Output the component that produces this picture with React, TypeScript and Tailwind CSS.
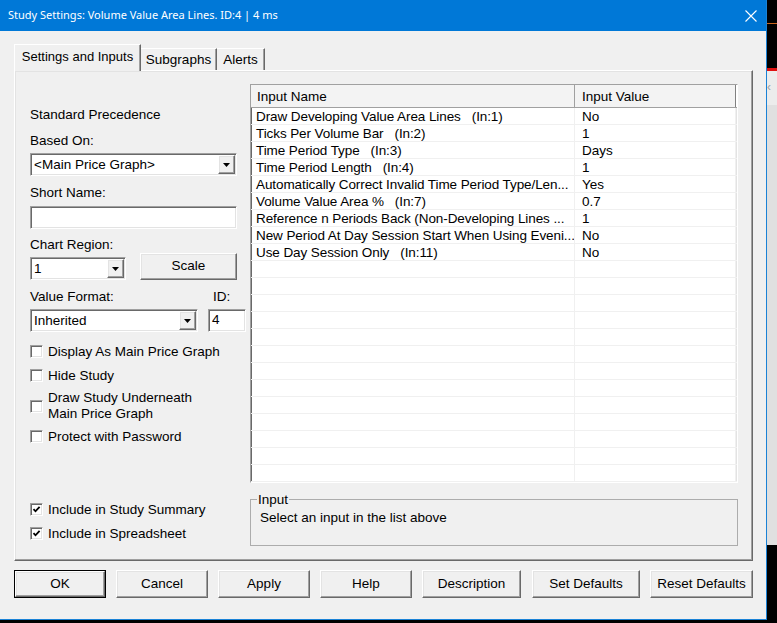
import React from 'react';

const sunken =
  'border border-t-[#a0a0a0] border-l-[#a0a0a0] border-r-white border-b-white bg-white shadow-[inset_1px_1px_0_#696969,inset_-1px_-1px_0_#e3e3e3]';
const raised =
  'border border-t-white border-l-white border-r-[#696969] border-b-[#696969] bg-[#f0f0f0] shadow-[inset_-1px_-1px_0_#a0a0a0,inset_1px_1px_0_#e3e3e3]';

const rows: [string, string][] = [
  ['Draw Developing Value Area Lines   (In:1)', 'No'],
  ['Ticks Per Volume Bar   (In:2)', '1'],
  ['Time Period Type   (In:3)', 'Days'],
  ['Time Period Length   (In:4)', '1'],
  ['Automatically Correct Invalid Time Period Type/Len...', 'Yes'],
  ['Volume Value Area %   (In:7)', '0.7'],
  ['Reference n Periods Back (Non-Developing Lines ...', '1'],
  ['New Period At Day Session Start When Using Eveni...', 'No'],
  ['Use Day Session Only   (In:11)', 'No'],
];

const DropArrow = () => (
  <div className={`flex h-[19px] w-[17px] shrink-0 items-center justify-center ${raised}`}>
    <svg width="7" height="4" viewBox="0 0 7 4">
      <path d="M0 0H7L3.5 4Z" fill="#000" />
    </svg>
  </div>
);

const Combo: React.FC<{ value: string; width: string }> = ({ value, width }) => (
  <div className={`flex h-[23px] items-center p-[1px] ${width} ${sunken}`}>
    <span className="flex-1 truncate pl-[2px] leading-[17px]">{value}</span>
    <DropArrow />
  </div>
);

const CheckBox: React.FC<{ checked?: boolean }> = ({ checked }) => (
  <div className={`flex h-[13px] w-[13px] shrink-0 items-center justify-center ${sunken}`}>
    {checked && (
      <svg width="9" height="9" viewBox="0 0 9 9">
        <path d="M1.5 4.2L3.5 6.3L7.6 1.8" stroke="#000" strokeWidth="1.8" fill="none" />
      </svg>
    )}
  </div>
);

const Check: React.FC<{ label: React.ReactNode; checked?: boolean; className?: string }> = ({
  label,
  checked,
  className = '',
}) => (
  <div className={`flex items-center gap-[5px] ${className}`}>
    <CheckBox checked={checked} />
    <div className="leading-[17px]">{label}</div>
  </div>
);

const Btn: React.FC<{ label: string; width: string; isDefault?: boolean }> = ({ label, width, isDefault }) => (
  <div className={`h-[28px] ${width} ${isDefault ? 'border border-black' : ''}`}>
    <div className={`flex h-full w-full items-center justify-center ${raised}`}>{label}</div>
  </div>
);

export default function App() {
  return (
    <div className="flex h-[623px] w-[777px] overflow-hidden bg-black font-['Liberation_Sans',Arial,sans-serif] text-[13.5px] text-black">
      {/* dialog */}
      <div className="flex h-[620px] w-[767px] shrink-0 flex-col border-r border-b border-[#1a82d6] bg-[#f0f0f0]">
        <div className="flex h-[31px] shrink-0 items-center bg-[#0078d7] pl-[8px] pr-[9px] font-['Noto_Sans',sans-serif] text-[11px] text-white">
          <span>Study Settings: Volume Value Area Lines. ID:4 | 4 ms</span>
          <svg className="ml-auto" width="12" height="12" viewBox="0 0 12 12">
            <path d="M0.5 0.5L11.5 11.5M11.5 0.5L0.5 11.5" stroke="#fff" strokeWidth="1.1" />
          </svg>
        </div>

        {/* tabs */}
        <div className="ml-[14px] mt-[13px] flex h-[27px] items-end">
          <div className="relative z-10 flex h-[27px] w-[127px] items-center justify-center border-l border-t border-r border-l-white border-t-white border-r-[#696969] bg-[#f0f0f0] pb-[2px] text-[13px] shadow-[inset_-1px_0_0_#a0a0a0]">
            Settings and Inputs
          </div>
          <div className="flex h-[23px] w-[76px] items-center justify-center border-t border-r border-t-white border-r-[#696969] shadow-[inset_-1px_0_0_#a0a0a0]">
            Subgraphs
          </div>
          <div className="flex h-[23px] w-[48px] items-center justify-center border-t border-r border-t-white border-r-[#696969] shadow-[inset_-1px_0_0_#a0a0a0]">
            Alerts
          </div>
        </div>

        {/* panel */}
        <div className="-mt-[1px] ml-[14px] flex h-[491px] w-[739px] border border-t-white border-l-white border-r-[#696969] border-b-[#696969] pl-[15px] shadow-[inset_-1px_-1px_0_#a0a0a0,inset_1px_1px_0_#e3e3e3]">
          {/* left column */}
          <div className="flex w-[218px] shrink-0 flex-col">
            <div className="mt-[35px] leading-[17px]">Standard Precedence</div>
            <div className="mt-[9px] leading-[17px]">Based On:</div>
            <div className="mt-[4px]">
              <Combo value="<Main Price Graph>" width="w-[207px]" />
            </div>
            <div className="mt-[8px] leading-[17px]">Short Name:</div>
            <div className={`mt-[5px] h-[23px] w-[207px] ${sunken}`} />
            <div className="mt-[7px] leading-[17px]">Chart Region:</div>
            <div className="flex items-end">
              <Combo value="1" width="w-[96px]" />
              <div className={`ml-[14px] flex h-[27px] w-[97px] items-center justify-center ${raised}`}>Scale</div>
            </div>
            <div className="mt-[8px] flex leading-[17px]">
              <span className="w-[183px]">Value Format:</span>
              <span>ID:</span>
            </div>
            <div className="mt-[4px] flex">
              <Combo value="Inherited" width="w-[168px]" />
              <div className={`ml-[10px] flex h-[23px] w-[38px] items-center pl-[3px] ${sunken}`}>4</div>
            </div>
            <Check className="mt-[11px]" label="Display As Main Price Graph" />
            <Check className="mt-[7px]" label="Hide Study" />
            <Check
              className="mt-[6px]"
              label={
                <div className="leading-[16px]">
                  Draw Study Underneath
                  <br />
                  Main Price Graph
                </div>
              }
            />
            <Check className="mt-[6px]" label="Protect with Password" />
            <Check className="mt-[56px]" checked label="Include in Study Summary" />
            <Check className="mt-[7px]" checked label="Include in Spreadsheet" />
          </div>

          {/* right column */}
          <div className="ml-[2px] flex w-[488px] shrink-0 flex-col">
            <div className={`mt-[13px] h-[399px] overflow-hidden ${sunken}`}>
              <div className="flex h-[23px] border-b border-[#a0a0a0] bg-white">
                <div className="flex w-[324px] items-center border-r border-[#a0a0a0] bg-[#f3f3f3] pl-[6px] pt-[1px] leading-[17px]">
                  Input Name
                </div>
                <div className="flex w-[161px] items-center border-r border-[#808080] bg-[#f3f3f3] pl-[7px] pt-[1px] leading-[17px]">
                  Input Value
                </div>
              </div>
              {Array.from({ length: 24 }).map((_, i) => (
                <div key={i} className="flex h-[17px] border-b border-[#f0f0f0]">
                  <div className="w-[324px] overflow-hidden whitespace-pre border-r border-[#f0f0f0] pl-[5px] leading-[17px] tracking-[-0.09px]">
                    {rows[i]?.[0] ?? ''}
                  </div>
                  <div className="w-[161px] border-r border-[#f0f0f0] pl-[7px] leading-[17px]">{rows[i]?.[1] ?? ''}</div>
                </div>
              ))}
            </div>
            <fieldset className="mt-[8px] h-[55px] border border-[#acacac] pl-[6px]">
              <legend className="px-[1px] leading-[17px]">Input</legend>
              <div className="pl-[3px] pt-[1px] leading-[17px]">Select an input in the list above</div>
            </fieldset>
          </div>
        </div>

        {/* buttons */}
        <div className="ml-[14px] mt-[9px] flex gap-[10px]">
          <Btn label="OK" width="w-[92px]" isDefault />
          <Btn label="Cancel" width="w-[92px]" />
          <Btn label="Apply" width="w-[92px]" />
          <Btn label="Help" width="w-[92px]" />
          <Btn label="Description" width="w-[99px]" />
          <div className="ml-[1px]">
            <Btn label="Set Defaults" width="w-[108px]" />
          </div>
          <Btn label="Reset Defaults" width="w-[103px]" />
        </div>
      </div>

      {/* background window strip */}
      <div className="flex w-[10px] flex-col">
        <div className="h-[23px] bg-black" />
        <div className="h-px bg-[#c8641e]" />
        <div className="h-[44px] bg-black" />
        <div className="h-[3px] bg-[#e01010]" />
        <div className="flex h-[34px] items-start bg-[#ececec] pt-[10px] text-[12px] leading-[12px] text-[#a0a0a0]">
          ‹
        </div>
        <div className="h-[440px] bg-[#e0e0e0]" />
        <div className="flex-1 bg-black" />
      </div>
    </div>
  );
}
